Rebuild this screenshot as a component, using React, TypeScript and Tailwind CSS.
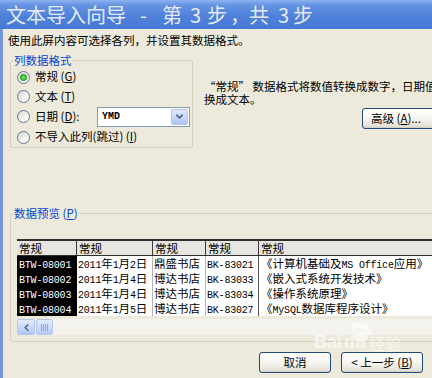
import React from "react";
import { ChevronDown, ChevronLeft } from "lucide-react";

const MONO_CLS = "font-['Liberation_Mono',monospace] text-[10px] tracking-[-0.2px]";

function Mixed({ text }: { text: string }) {
  const parts = text.split(/([\x21-\x7E][\x20-\x7E]*[\x21-\x7E]|[\x21-\x7E])/).filter(Boolean);
  return (
    <>
      {parts.map((p, i) =>
        /^[\x20-\x7E]+$/.test(p) && p.trim() ? (
          <span key={i} className={MONO_CLS}>
            {p}
          </span>
        ) : (
          <span key={i}>{p}</span>
        )
      )}
    </>
  );
}

function Radio({ checked }: { checked?: boolean }) {
  return (
    <span className="w-[13px] h-[13px] rounded-full border border-[#5f7694] bg-[linear-gradient(135deg,#d8d6cc_0%,#f4f3ee_60%,#ffffff_100%)] flex items-center justify-center shrink-0">
      {checked && (
        <span className="w-[7px] h-[7px] rounded-full bg-[radial-gradient(circle,#7ee27e_0%,#2fae2f_55%,#1f8f1f_100%)]" />
      )}
    </span>
  );
}

const xpBtn =
  "h-[21px] rounded-[3px] border border-[#1f4a7a] bg-[linear-gradient(to_bottom,#ffffff_0%,#f5f4ef_55%,#e6e3d8_88%,#d4cec2_100%)] flex items-center text-[11.5px] text-black leading-none";

const rows = [
  ["BTW-08001", "2011年1月2日", "鼎盛书店", "BK-83021", "《计算机基础及MS Office应用》"],
  ["BTW-08002", "2011年1月4日", "博达书店", "BK-83033", "《嵌入式系统开发技术》"],
  ["BTW-08003", "2011年1月4日", "博达书店", "BK-83034", "《操作系统原理》"],
  ["BTW-08004", "2011年1月5日", "博达书店", "BK-83027", "《MySQL数据库程序设计》"],
];

const cols = "grid grid-cols-[60px_76px_53px_53px_220px]";

export default function App() {
  return (
    <div className="relative w-[432px] h-[378px] overflow-hidden flex flex-col bg-[#edeadb] text-black text-[11.5px] font-['Noto_Sans_CJK_SC',sans-serif]">
      {/* Title bar */}
      <div className="h-[29px] shrink-0 flex items-center bg-[linear-gradient(to_bottom,#8db2ee_0%,#6593e2_18%,#4f81da_55%,#4679d7_100%)] text-[#e2eaf8] text-[20px] leading-none whitespace-nowrap pl-[6px]">
        <span className="w-[134px]">文本导入向导</span>
        <span className="w-[22px]">-</span>
        <span className="w-[28px]">第</span>
        <span className="w-[17px]">3</span>
        <span className="w-[23px]">步</span>
        <span className="w-[19px]">，</span>
        <span className="w-[29px]">共</span>
        <span className="w-[15px]">3</span>
        <span>步</span>
      </div>

      {/* Body */}
      <div className="flex-1 flex flex-col border-l-[3px] border-[#7595db] pl-[7px]">
        <div className="mt-[4px] ml-[-2px] leading-[14px] whitespace-nowrap">
          使用此屏内容可选择各列，并设置其数据格式。
        </div>

        <div className="flex items-start mt-[6px]">
          <fieldset className="w-[183px] shrink-0 border border-[#d0d0bf] rounded-[3px]">
            <legend className="ml-[2px] px-[1px] leading-[14px] text-[#0046d5]">列数据格式</legend>
            <div className="pl-[6px] flex flex-col">
              <div className="h-[20px] flex items-center gap-[5px]">
                <Radio checked />
                <span>
                  常规 (<span className="underline">G</span>)
                </span>
              </div>
              <div className="h-[19px] flex items-center gap-[5px]">
                <Radio />
                <span>
                  文本 (<span className="underline">T</span>)
                </span>
              </div>
              <div className="h-[21px] flex items-center gap-[5px]">
                <Radio />
                <span className="w-[57px]">
                  日期 (<span className="underline">D</span>):
                </span>
                <div className="w-[93px] h-[20px] border border-[#7f9db9] bg-white flex items-center justify-between pl-[4px] pr-[1px]">
                  <span className="font-['Liberation_Mono',monospace] text-[10px] font-bold">YMD</span>
                  <span className="w-[17px] h-[16px] rounded-[2px] border border-[#b4c6ee] bg-[linear-gradient(to_bottom,#dfe8fd_0%,#c3d4fb_60%,#aec4f6_100%)] flex items-center justify-center">
                    <ChevronDown size={11} strokeWidth={3.2} color="#4d6185" />
                  </span>
                </div>
              </div>
              <div className="h-[20px] flex items-center gap-[5px]">
                <Radio />
                <span>
                  不导入此列(跳过) (<span className="underline">I</span>)
                </span>
              </div>
            </div>
          </fieldset>

          <div className="ml-[11px] w-[300px] shrink-0 mt-[27px] flex flex-col">
            <div className="leading-[13px] whitespace-nowrap">
              “常规” 数据格式将数值转换成数字，日期值会转换成日期，其余数据则转
            </div>
            <div className="leading-[13px] whitespace-nowrap">换成文本。</div>
            <div className={`${xpBtn} mt-[2px] ml-[158px] w-[82px] h-[20px] pl-[8px]`}>
              高级 (<span className="underline">A</span>)...
            </div>
          </div>
        </div>

        <fieldset className="mt-[58px] w-[440px] shrink-0 border border-[#d0d0bf] rounded-[3px]">
          <legend className="ml-[2px] px-[1px] leading-[14px] text-[#0046d5]">
            数据预览 (<span className="underline">P</span>)
          </legend>
          <div className="pl-[6px] pt-[19px] pb-[6px] flex flex-col">
            <div className="flex flex-col">
              <div className={`${cols} h-[17px] bg-[#e6e5df] border-t-2 border-b border-[#2e2e2e] leading-[14px]`}>
                {["常规", "常规", "常规", "常规", "常规"].map((h, i) => (
                  <div key={i} className={`pl-[2px] ${i < 4 ? "border-r border-[#3a3a3a]" : ""}`}>
                    {h}
                  </div>
                ))}
              </div>
              {rows.map((r, ri) => (
                <div key={ri} className={`${cols} h-[15px] leading-[15px] whitespace-nowrap`}>
                  <div className="bg-black text-white pl-[2px] overflow-hidden">
                    <Mixed text={r[0]} />
                  </div>
                  <div className="bg-white pl-[1px] border-r border-[#b5b5b5] overflow-hidden">
                    <Mixed text={r[1]} />
                  </div>
                  <div className="bg-white pl-[1px] border-r border-[#b5b5b5] overflow-hidden">
                    <Mixed text={r[2]} />
                  </div>
                  <div className="bg-white pl-[1px] border-r border-[#555] overflow-hidden">
                    <Mixed text={r[3]} />
                  </div>
                  <div className="bg-white pl-[2px] overflow-hidden">
                    <Mixed text={r[4]} />
                  </div>
                </div>
              ))}
            </div>
            <div className="mt-[3px] h-[16px] flex bg-[#f3f2ec]">
              <div className="w-[18px] h-[16px] rounded-[2px] border border-[#b4c6ee] bg-[linear-gradient(to_bottom,#e3ebfd_0%,#c6d6fb_60%,#b1c6f6_100%)] flex items-center justify-center">
                <ChevronLeft size={11} strokeWidth={3.2} color="#4d6185" />
              </div>
              <div className="ml-[1px] w-[17px] h-[16px] rounded-[2px] border border-[#b4c6ee] bg-[linear-gradient(to_bottom,#e3ebfd_0%,#c9d8fb_60%,#b8cbf7_100%)] flex items-center justify-center gap-[1px]">
                <span className="w-[1px] h-[7px] bg-[#8ea6dc]" />
                <span className="w-[1px] h-[7px] bg-[#8ea6dc]" />
                <span className="w-[1px] h-[7px] bg-[#8ea6dc]" />
                <span className="w-[1px] h-[7px] bg-[#8ea6dc]" />
              </div>
            </div>
          </div>
        </fieldset>

        <div className="mt-[10px] flex justify-end gap-[10px] pr-[9px]">
          <div className={`${xpBtn} w-[72px] justify-center`}>取消</div>
          <div className={`${xpBtn} w-[82px] justify-center`}>
            &lt; 上一步 (<span className="underline">B</span>)
          </div>
        </div>
      </div>

      {/* Baidu watermark */}
      <div className="absolute left-[314px] top-[320px] pointer-events-none opacity-60">
        <svg width="30" height="22" viewBox="0 0 30 22" className="absolute left-[32px] top-[2px]">
          <ellipse cx="8" cy="5" rx="3" ry="4" fill="#ffffff" />
          <ellipse cx="14" cy="3" rx="3" ry="3.5" fill="#ffffff" />
          <ellipse cx="20" cy="5" rx="3" ry="4" fill="#ffffff" />
          <ellipse cx="24" cy="10" rx="2.5" ry="3" fill="#ffffff" />
          <ellipse cx="15" cy="15" rx="7" ry="5.5" fill="#ffffff" />
        </svg>
        <div className="mt-[13px] flex items-end text-white font-['Liberation_Sans',sans-serif] font-bold text-[18px] leading-none">
          <span>Bai</span>
          <span className="ml-[2px]">du</span>
          <span className="ml-[3px] text-[16px] font-normal font-['Noto_Sans_CJK_SC',sans-serif]">经验</span>
        </div>
      </div>
    </div>
  );
}
